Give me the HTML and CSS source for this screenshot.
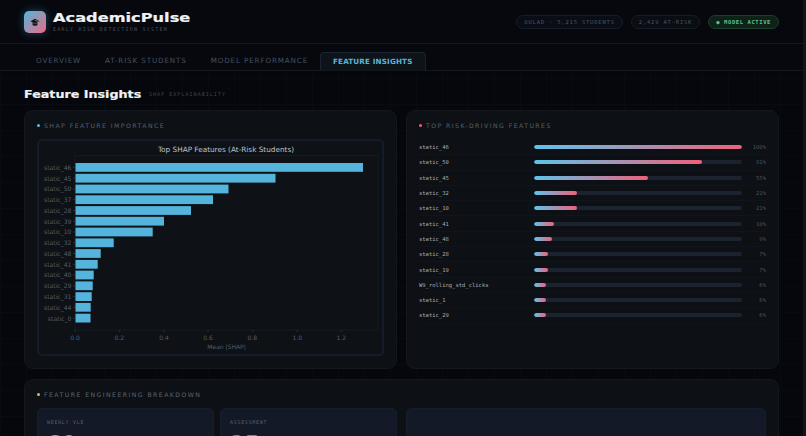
FILE: index.html
```html
<!DOCTYPE html>
<html lang="en">
<head>
<meta charset="utf-8">
<title>AcademicPulse</title>
<link rel="stylesheet" href="styles.css">
</head>
<body>
<div class="page">
  <header class="header">
    <div class="brand">
      <div class="logo">
        <svg width="10" height="10" viewBox="0 0 24 24"><path d="M12 4 1 10l11 6 11-6z" fill="#14171c"/><path d="M6 14v5c2 2.5 10 2.5 12 0v-5l-6 3z" fill="#14171c"/><path d="M12 8l8 3v6" stroke="#c9a24a" stroke-width="1.4" fill="none"/></svg>
      </div>
      <div class="brand-text">
        <div class="brand-name">AcademicPulse</div>
        <div class="brand-sub">EARLY RISK DETECTION SYSTEM</div>
      </div>
    </div>
    <div class="pills">
      <span class="pill">OULAD · 5,215 STUDENTS</span>
      <span class="pill">2,429 AT-RISK</span>
      <span class="pill pill-green">● MODEL ACTIVE</span>
    </div>
  </header>
  <nav class="tabs">
    <span class="tab">OVERVIEW</span>
    <span class="tab">AT-RISK STUDENTS</span>
    <span class="tab">MODEL PERFORMANCE</span>
    <span class="tab tab-active">FEATURE INSIGHTS</span>
  </nav>
  <main class="main">
    <div class="page-title"><h1>Feature Insights</h1><span>SHAP EXPLAINABILITY</span></div>
    <div class="two">
      <section class="card">
        <h2 class="card-title"><i class="dot dot-cyan"></i>SHAP FEATURE IMPORTANCE</h2>
        <div class="chart">
          <svg class="chart-svg" width="347" height="217" viewBox="37 139 347 217">
            <text class="c-title" x="226" y="152" text-anchor="middle">Top SHAP Features (At-Risk Students)</text>
            <rect class="plot" x="75" y="155.5" width="303" height="174.5"/>
            <path class="ticks" d="M73 167.4h2M73 178.2h2M73 189h2M73 199.7h2M73 210.5h2M73 221.2h2M73 232h2M73 242.8h2M73 253.5h2M73 264.3h2M73 275h2M73 285.8h2M73 296.6h2M73 307.3h2M73 318.1h2M75 330v2M119.3 330v2M164 330v2M208 330v2M252.3 330v2M297.3 330v2M341.3 330v2"/>
            <g class="bars">
              <rect x="75.5" y="163" width="287.5" height="8.8"/>
              <rect x="75.5" y="173.8" width="200" height="8.8"/>
              <rect x="75.5" y="184.6" width="153" height="8.8"/>
              <rect x="75.5" y="195.3" width="137.5" height="8.8"/>
              <rect x="75.5" y="206.1" width="115.5" height="8.8"/>
              <rect x="75.5" y="216.8" width="88.5" height="8.8"/>
              <rect x="75.5" y="227.6" width="77.2" height="8.8"/>
              <rect x="75.5" y="238.4" width="38.2" height="8.8"/>
              <rect x="75.5" y="249.1" width="25.2" height="8.8"/>
              <rect x="75.5" y="259.9" width="22.2" height="8.8"/>
              <rect x="75.5" y="270.6" width="18.2" height="8.8"/>
              <rect x="75.5" y="281.4" width="17.2" height="8.8"/>
              <rect x="75.5" y="292.2" width="16.2" height="8.8"/>
              <rect x="75.5" y="302.9" width="15.2" height="8.8"/>
              <rect x="75.5" y="313.7" width="15" height="8.8"/>
            </g>
            <g class="ylab" text-anchor="end">
              <text x="71.5" y="169.8">static_46</text>
              <text x="71.5" y="180.6">static_45</text>
              <text x="71.5" y="191.4">static_50</text>
              <text x="71.5" y="202.1">static_37</text>
              <text x="71.5" y="212.9">static_28</text>
              <text x="71.5" y="223.6">static_39</text>
              <text x="71.5" y="234.4">static_10</text>
              <text x="71.5" y="245.2">static_32</text>
              <text x="71.5" y="255.9">static_48</text>
              <text x="71.5" y="266.7">static_41</text>
              <text x="71.5" y="277.4">static_40</text>
              <text x="71.5" y="288.2">static_29</text>
              <text x="71.5" y="299">static_31</text>
              <text x="71.5" y="309.7">static_44</text>
              <text x="71.5" y="320.5">static_0</text>
            </g>
            <g class="xlab" text-anchor="middle">
              <text x="75" y="339.5">0.0</text>
              <text x="119.3" y="339.5">0.2</text>
              <text x="164" y="339.5">0.4</text>
              <text x="208" y="339.5">0.6</text>
              <text x="252.3" y="339.5">0.8</text>
              <text x="297.3" y="339.5">1.0</text>
              <text x="341.3" y="339.5">1.2</text>
              <text x="226.5" y="348.5">Mean |SHAP|</text>
            </g>
          </svg>
        </div>
      </section>
      <section class="card">
        <h2 class="card-title"><i class="dot dot-red"></i>TOP RISK-DRIVING FEATURES</h2>
        <div class="risk">
          <div class="row"><span class="name">static_46</span><span class="track"><span class="fill" style="width:100%"></span></span><span class="pct">100%</span></div>
          <div class="row"><span class="name">static_50</span><span class="track"><span class="fill" style="width:81%"></span></span><span class="pct">81%</span></div>
          <div class="row"><span class="name">static_45</span><span class="track"><span class="fill" style="width:55%"></span></span><span class="pct">55%</span></div>
          <div class="row"><span class="name">static_32</span><span class="track"><span class="fill" style="width:21%"></span></span><span class="pct">21%</span></div>
          <div class="row"><span class="name">static_10</span><span class="track"><span class="fill" style="width:21%"></span></span><span class="pct">21%</span></div>
          <div class="row"><span class="name">static_41</span><span class="track"><span class="fill" style="width:10%"></span></span><span class="pct">10%</span></div>
          <div class="row"><span class="name">static_48</span><span class="track"><span class="fill" style="width:9%"></span></span><span class="pct">9%</span></div>
          <div class="row"><span class="name">static_28</span><span class="track"><span class="fill" style="width:7%"></span></span><span class="pct">7%</span></div>
          <div class="row"><span class="name">static_19</span><span class="track"><span class="fill" style="width:7%"></span></span><span class="pct">7%</span></div>
          <div class="row"><span class="name">W9_rolling_std_clicks</span><span class="track"><span class="fill" style="width:6%"></span></span><span class="pct">6%</span></div>
          <div class="row"><span class="name">static_1</span><span class="track"><span class="fill" style="width:6%"></span></span><span class="pct">6%</span></div>
          <div class="row"><span class="name">static_29</span><span class="track"><span class="fill" style="width:6%"></span></span><span class="pct">6%</span></div>
        </div>
      </section>
    </div>
    <section class="card card-bottom">
      <h2 class="card-title"><i class="dot dot-amber"></i>FEATURE ENGINEERING BREAKDOWN</h2>
      <div class="breakdown">
        <div class="tile"><div class="tile-label">WEEKLY VLE</div><div class="tile-val val-cyan">60</div></div>
        <div class="tile"><div class="tile-label">ASSESSMENT</div><div class="tile-val val-pink">15</div></div>
        <div class="tile"></div>
      </div>
    </section>
  </main>
  <div class="scrollbar"></div>
</div>
</body>
</html>
```
FILE: styles.css
```css
* { box-sizing: border-box; }
html, body { margin: 0; height: 436px; overflow: hidden; background: #05070c; }
body { font-family: "DejaVu Sans", sans-serif; color: #c9d1d9; }
.page {
  width: 806px; height: 436px; overflow: hidden; padding-right: 3px; position: relative;
  background-color: #05070c;
  background-image:
    linear-gradient(90deg, rgba(120,160,200,.025) 1px, transparent 1px),
    linear-gradient(rgba(120,160,200,.018) 1px, transparent 1px);
  background-size: 26px 26px;
}
.scrollbar { position: absolute; top: 0; right: 0; width: 3px; height: 436px; background: #11151b; }

.header { height: 44px; display: flex; align-items: center; justify-content: space-between; padding: 0 24px; border-bottom: 1px solid #12161d; background: #06080e; }
.brand { display: flex; align-items: center; gap: 7px; }
.logo { width: 22px; height: 22px; border-radius: 5px; background: linear-gradient(135deg, #4fb8dd, #ee6a85); display: flex; align-items: center; justify-content: center; box-shadow: 0 0 9px rgba(80,180,225,.35); }
.brand-name { font-size: 12px; line-height: 13px; margin-top: 1px; font-weight: 700; color: #eef2f6; transform: scaleX(1.35); transform-origin: left center; -webkit-text-stroke: .2px #eef2f6; }
.brand-sub { font-family: "DejaVu Sans Mono", monospace; font-size: 5px; line-height: 7px; margin-top: 1px; color: #47505c; letter-spacing: 1.25px; }
.pills { display: flex; gap: 8px; }
.pill { height: 14px; padding: 0 7px; border: 1px solid #171c25; border-radius: 8px; font-family: "DejaVu Sans Mono", monospace; font-size: 5.5px; line-height: 12px; letter-spacing: .8px; color: #4a5460; background: #0a0d13; }
.pill-green { color: #62c088; background: #0e2219; border-color: #1b3d2b; font-weight: 700; letter-spacing: .6px; }

.tabs { height: 27px; display: flex; align-items: flex-end; padding: 0 24px; border-bottom: 1px solid #12161d; background: #06080e; }
.tab { height: 18px; padding: 0 12px; font-size: 7.2px; line-height: 18px; letter-spacing: .85px; color: #47515e; white-space: nowrap; }
.tab-active { color: #5cb6d8; font-weight: 700; background: #0e131a; border: 1px solid #1a2430; border-bottom: 0; border-radius: 4px 4px 0 0; line-height: 17px; letter-spacing: .15px; }

.main { padding: 0 24px; }
.page-title { height: 39px; display: flex; align-items: center; gap: 28px; padding-top: 6px; }
.page-title h1 { margin: 0; font-size: 10.5px; font-weight: 700; letter-spacing: 0; color: #f0f3f6; transform: scaleX(1.21); transform-origin: left center; -webkit-text-stroke: .2px #f0f3f6; white-space: nowrap; }
.page-title span { font-family: "DejaVu Sans Mono", monospace; font-size: 5px; letter-spacing: 1.05px; color: #3d4652; }

.two { display: grid; grid-template-columns: 373px 373px; gap: 9px; }
.card { height: 259px; background: #0d1015; border: 1px solid #14181e; border-radius: 9px; padding: 10px 12px; }
.card-title { margin: 0; height: 9px; display: flex; align-items: center; gap: 4px; font-size: 6.2px; font-weight: 400; letter-spacing: 1.43px; color: #56616d; white-space: nowrap; }
.dot { width: 3px; height: 3px; border-radius: 50%; }
.dot-cyan { background: #4fc3dc; }
.dot-red { background: #e9607c; }
.dot-amber { background: #e8b45a; }

.chart { margin-top: 9px; width: 347px; height: 217px; border: 2px solid #151c29; border-radius: 5px; background: #0e1116; overflow: hidden; }
.chart-svg { display: block; margin: -2px; }
.c-title { font-size: 7.3px; fill: #bcc3cb; }
.plot { fill: none; stroke: #151a22; stroke-width: 1; }
.ticks { stroke: #3a424d; stroke-width: .6; fill: none; }
.bars rect { fill: #54b4dc; }
.ylab text { font-size: 6.1px; fill: #555d68; }
.xlab text { font-size: 6px; fill: #555d68; }

.risk { margin-top: 10px; }
.row { height: 15.3px; display: flex; align-items: center; border-bottom: 1px solid #11151b; }
.name { width: 115px; font-family: "DejaVu Sans Mono", monospace; font-size: 5.5px; color: #a3abb5; white-space: nowrap; }
.track { width: 209px; height: 4px; border-radius: 2px; background: #1b2331; overflow: hidden; display: block; }
.fill { display: block; height: 4px; border-radius: 2px; background: linear-gradient(90deg, #5cc4ec, #f0607a); }
.pct { width: 24.5px; text-align: right; font-family: "DejaVu Sans Mono", monospace; font-size: 5.5px; color: #48525e; }

.card-bottom { margin-top: 10px; width: 755px; height: 80px; }
.card-bottom .card-title { color: #5c6773; }
.breakdown { margin-top: 9px; display: grid; grid-template-columns: 177px 177px 363px; gap: 6px; }
.breakdown .tile:last-child { margin-left: 3px; }
.tile { height: 60px; background: #131926; border: 1px solid #171e2b; border-radius: 5px; padding: 10px 9px; }
.tile-label { font-family: "DejaVu Sans Mono", monospace; font-size: 5px; letter-spacing: .7px; color: #56606e; }
.tile-val { font-size: 20px; line-height: 20px; font-weight: 700; margin-top: 7px; letter-spacing: 1px; }
.val-cyan { color: #4fb8dd; }
.val-pink { color: #e4587a; }
```
